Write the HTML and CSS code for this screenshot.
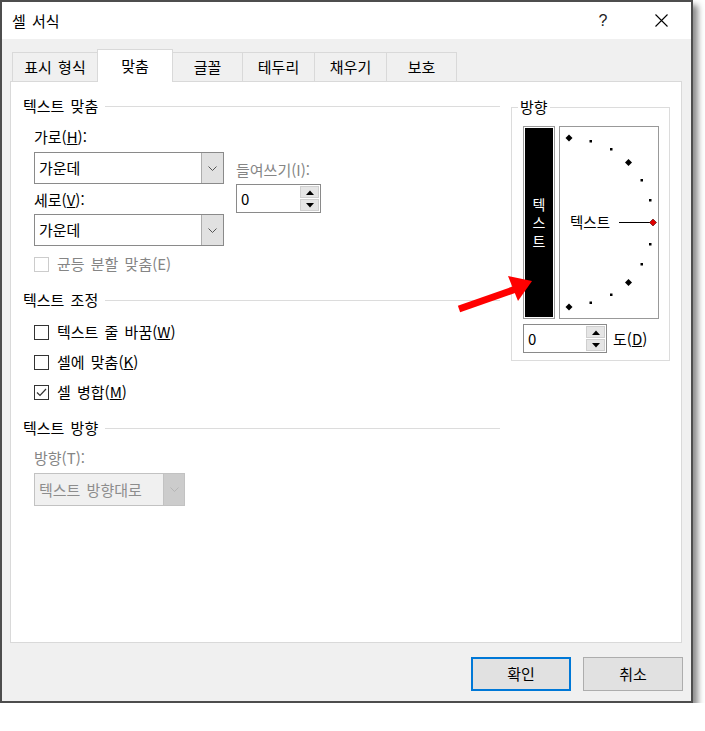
FILE: index.html
```html
<!DOCTYPE html>
<html lang="ko">
<head>
<meta charset="utf-8">
<title>셀 서식</title>
<link rel="stylesheet" href="styles.css">
</head>
<body>
<div class="dialog">
  <div class="titlebar">
    <span class="title">셀 서식</span>
    <div class="title-actions">
      <span class="help">?</span>
      <span class="close"><svg width="13" height="13" viewBox="0 0 13 13"><path d="M0.5 0.5L12.5 12.5M12.5 0.5L0.5 12.5" stroke="#000" stroke-width="1.1" fill="none"/></svg></span>
    </div>
  </div>

  <div class="tabs">
    <div class="tab t1">표시 형식</div>
    <div class="tab t2 active">맞춤</div>
    <div class="tab t3">글꼴</div>
    <div class="tab t4">테두리</div>
    <div class="tab t5">채우기</div>
    <div class="tab t6">보호</div>
  </div>

  <div class="panel">
    <div class="cols">
      <div class="left">
        <div class="group-head"><span>텍스트 맞춤</span><i class="rule"></i></div>
        <div class="align-row">
          <div class="align-main">
            <div class="lbl">가로(<u>H</u>):</div>
            <div class="combo c-first">
              <span class="combo-text">가운데</span>
              <span class="combo-btn"><svg width="9" height="5" viewBox="0 0 9 5"><polyline points="0.5,0.5 4.5,4.5 8.5,0.5" fill="none" stroke="#555" stroke-width="1"/></svg></span>
            </div>
            <div class="lbl l-second">세로(<u>V</u>):</div>
            <div class="combo c-second">
              <span class="combo-text">가운데</span>
              <span class="combo-btn"><svg width="9" height="5" viewBox="0 0 9 5"><polyline points="0.5,0.5 4.5,4.5 8.5,0.5" fill="none" stroke="#555" stroke-width="1"/></svg></span>
            </div>
          </div>
          <div class="indent">
            <div class="lbl dis">들여쓰기(I):</div>
            <div class="spin s-indent">
              <span class="spin-val">0</span>
              <span class="spin-btns">
                <span class="sb"><svg width="8" height="5" viewBox="0 0 8 5"><polygon points="0,5 4,0.5 8,5" fill="#000"/></svg></span>
                <span class="sb"><svg width="8" height="5" viewBox="0 0 8 5"><polygon points="0,0 4,4.5 8,0" fill="#000"/></svg></span>
              </span>
            </div>
          </div>
        </div>
        <div class="check dis c-dist"><span class="box"></span><span>균등 분할 맞춤(E)</span></div>

        <div class="group-head g2"><span>텍스트 조정</span><i class="rule"></i></div>
        <div class="check c-wrap"><span class="box"></span><span>텍스트 줄 바꿈(<u>W</u>)</span></div>
        <div class="check c-fit"><span class="box"></span><span>셀에 맞춤(<u>K</u>)</span></div>
        <div class="check c-merge"><span class="box"><svg width="13" height="13" viewBox="0 0 13 13"><polyline points="2,6.5 5,9.5 11,3" fill="none" stroke="#333" stroke-width="1.2"/></svg></span><span>셀 병합(<u>M</u>)</span></div>

        <div class="group-head g3"><span>텍스트 방향</span><i class="rule"></i></div>
        <div class="lbl dis l-dir">방향(T):</div>
        <div class="combo disabled">
          <span class="combo-text">텍스트 방향대로</span>
          <span class="combo-btn"><svg width="9" height="5" viewBox="0 0 9 5"><polyline points="0.5,0.5 4.5,4.5 8.5,0.5" fill="none" stroke="#b5b5b5" stroke-width="1"/></svg></span>
        </div>
      </div>

      <fieldset class="orient">
        <legend>방향</legend>
        <div class="orient-inner">
          <div class="orient-row">
            <div class="vtext"><span>텍</span><span>스</span><span>트</span></div>
            <div class="dial">
              <svg class="dial-svg" width="98" height="191" viewBox="0 0 98 191">
                <g fill="#000">
                  <polygon points="9,7.5 12.5,11 9,14.5 5.5,11"/>
                  <polygon points="68.5,32 72,35.5 68.5,39 65,35.5"/>
                  <polygon points="68.5,152 72,155.5 68.5,159 65,155.5"/>
                  <polygon points="9,176.5 12.5,180 9,183.5 5.5,180"/>
                  <rect x="29.5" y="13" width="2.5" height="2.5"/>
                  <rect x="50" y="21" width="2.5" height="2.5"/>
                  <rect x="80.5" y="52" width="2.5" height="2.5"/>
                  <rect x="89" y="72" width="2.5" height="2.5"/>
                  <rect x="89" y="116" width="2.5" height="2.5"/>
                  <rect x="80.5" y="136" width="2.5" height="2.5"/>
                  <rect x="50" y="166.5" width="2.5" height="2.5"/>
                  <rect x="29.5" y="174.5" width="2.5" height="2.5"/>
                </g>
                <line x1="59" y1="95.5" x2="90" y2="95.5" stroke="#000" stroke-width="1"/>
                <polygon points="93,92 96.5,95.5 93,99 89.5,95.5" fill="#e00000" stroke="#400" stroke-width="0.6"/>
              </svg>
              <span class="dial-text">텍스트</span>
            </div>
          </div>
          <div class="deg-row">
            <div class="spin s-deg">
              <span class="spin-val">0</span>
              <span class="spin-btns">
                <span class="sb"><svg width="8" height="5" viewBox="0 0 8 5"><polygon points="0,5 4,0.5 8,5" fill="#000"/></svg></span>
                <span class="sb"><svg width="8" height="5" viewBox="0 0 8 5"><polygon points="0,0 4,4.5 8,0" fill="#000"/></svg></span>
              </span>
            </div>
            <span class="deg-lbl">도(<u>D</u>)</span>
          </div>
        </div>
      </fieldset>
    </div>
  </div>

  <div class="buttons">
    <div class="btn default">확인</div>
    <div class="btn">취소</div>
  </div>

  <svg class="arrow" width="90" height="50" viewBox="0 0 90 50">
    <line x1="9" y1="39" x2="66" y2="19" stroke="#ff0000" stroke-width="7"/>
    <polygon points="58,6 82,11 68,31" fill="#ff0000"/>
  </svg>
</div>
</body>
</html>
```

FILE: styles.css
```css
* { box-sizing: border-box; }

body {
  margin: 0;
  background: #fff;
  font-family: "Noto Sans CJK KR", "Noto Sans", sans-serif;
  font-size: 15px;
  word-spacing: 2px;
  color: #000;
}

u { text-decoration: underline; text-underline-offset: 1px; }

.dialog {
  position: relative;
  width: 693px;
  height: 703px;
  border: 2px solid #4d4d4d;
  background: #f0f0f0;
  box-shadow: 5px 5px 6px rgba(0, 0, 0, 0.45);
  display: flex;
  flex-direction: column;
}

/* title bar */
.titlebar {
  height: 37px;
  background: #fff;
  display: flex;
  align-items: center;
  padding-left: 10px;
  flex-shrink: 0;
}
.title { line-height: 20px; }
.title-actions {
  margin-left: auto;
  margin-right: 7px;
  display: flex;
  align-items: center;
}
.help {
  width: 20px;
  text-align: center;
  line-height: 20px;
  color: #222;
  font-family: "Liberation Sans", sans-serif;
  font-size: 16px;
}
.close {
  width: 46px;
  margin-left: 25px;
  display: flex;
  justify-content: center;
}

/* tabs */
.tabs {
  display: flex;
  align-items: flex-end;
  height: 32px;
  margin-top: 10px;
  padding-left: 11px;
  flex-shrink: 0;
}
.tab {
  height: 29px;
  margin-left: -1px;
  border: 1px solid #d9d9d9;
  border-bottom: none;
  background: #f0f0f0;
  display: flex;
  align-items: center;
  justify-content: center;
  line-height: 20px;
}
.tab.active {
  position: relative;
  z-index: 1;
  height: 33px;
  margin-bottom: -1px;
  background: #fff;
}
.t1 { width: 86px; }
.t2 { width: 76px; }
.t3 { width: 71px; }
.t4 { width: 73px; }
.t5 { width: 73px; }
.t6 { width: 71px; }

/* panel */
.panel {
  margin: 0 9px 0 8px;
  height: 562px;
  border: 1px solid #d9d9d9;
  background: #fff;
  flex-shrink: 0;
}
.cols {
  display: flex;
  align-items: flex-start;
  padding-left: 12px;
}
.left {
  width: 477px;
  padding-top: 14px;
}

.group-head {
  display: flex;
  align-items: center;
  height: 20px;
  line-height: 20px;
}
.group-head .rule {
  flex: 1;
  height: 1px;
  background: #dcdcdc;
  margin-left: 7px;
}
.g2 { margin-top: 16px; }
.g3 { margin-top: 16px; }

.lbl {
  height: 20px;
  line-height: 20px;
  white-space: nowrap;
}
.dis { color: #858585; }

.align-row {
  display: flex;
  margin-top: 11px;
  margin-left: 11px;
}
.align-main { width: 190px; }
.c-first { margin-top: 5px; }
.l-second { margin-top: 6px; }
.c-second { margin-top: 4px; }

.indent {
  margin-left: 12px;
  padding-top: 33px;
}

/* combo box */
.combo {
  width: 190px;
  height: 32px;
  border: 1px solid #8a8a8a;
  background: #fff;
  display: flex;
  align-items: stretch;
}
.combo-text {
  flex: 1;
  padding-left: 4px;
  display: flex;
  align-items: center;
  line-height: 20px;
}
.combo-btn {
  width: 22px;
  background: #e1e1e1;
  border-left: 1px solid #adadad;
  display: flex;
  align-items: center;
  justify-content: center;
}
.combo.disabled {
  width: 151px;
  height: 33px;
  margin-left: 11px;
  margin-top: 5px;
  border-color: #c2c2c2;
  background: #f0f0f0;
  color: #8d8d8d;
}
.combo.disabled .combo-btn {
  width: 21px;
  background: #cccccc;
  border-left-color: #c2c2c2;
}

/* spin box */
.spin {
  height: 29px;
  border: 1px solid #8a8a8a;
  background: #fff;
  display: flex;
  align-items: stretch;
}
.s-indent { width: 85px; margin-top: 4px; }
.s-deg { width: 84px; }
.spin-val {
  flex: 1;
  padding-left: 4px;
  display: flex;
  align-items: center;
  line-height: 20px;
}
.spin-btns {
  width: 19px;
  margin: 1px 1px 1px 0;
  display: flex;
  flex-direction: column;
  gap: 1px;
}
.sb {
  flex: 1;
  background: #e5e5e5;
  border: 1px solid #cfcfcf;
  display: flex;
  align-items: center;
  justify-content: center;
}

/* checkboxes */
.check {
  display: flex;
  align-items: center;
  height: 20px;
  line-height: 20px;
  margin-left: 11px;
  white-space: nowrap;
}
.check .box {
  width: 15px;
  height: 15px;
  border: 1px solid #333;
  background: #fff;
  margin-right: 8px;
  display: flex;
  align-items: center;
  justify-content: center;
}
.check.dis .box { border-color: #cccccc; }
.c-dist { margin-top: 8px; }
.c-wrap { margin-top: 12px; }
.c-fit { margin-top: 10px; }
.c-merge { margin-top: 10px; }
.l-dir { margin-top: 10px; margin-left: 11px; }

/* orientation group */
.orient {
  margin: 15px 0 0 11px;
  padding: 0;
  width: 159px;
  border: 1px solid #dcdcdc;
  min-width: 0;
}
.orient legend {
  padding: 0 2px;
  margin-left: 6px;
  line-height: 20px;
  height: 20px;
}
.orient-inner {
  padding: 9px 0 7px 11px;
}
.orient-row {
  display: flex;
  gap: 4px;
}
.vtext {
  width: 32px;
  height: 193px;
  border: 1px solid #9a9a9a;
  padding: 1px;
  background: #000;
  background-clip: content-box;
  color: #fff;
  font-size: 14px;
  line-height: 18.5px;
  display: flex;
  flex-direction: column;
  align-items: center;
  justify-content: center;
}
.dial {
  position: relative;
  width: 100px;
  height: 193px;
  border: 1px solid #999;
  background: #fff;
}
.dial-svg { display: block; }
.dial-text {
  position: absolute;
  left: 10px;
  top: 85px;
  line-height: 20px;
  font-size: 14.5px;
}
.deg-row {
  display: flex;
  align-items: center;
  margin-top: 5px;
}
.deg-lbl {
  margin-left: 6px;
  line-height: 20px;
}

/* buttons */
.buttons {
  display: flex;
  justify-content: flex-end;
  gap: 12px;
  margin-top: 14px;
  padding-right: 8px;
}
.btn {
  width: 100px;
  height: 34px;
  border: 1px solid #adadad;
  background: #e1e1e1;
  display: flex;
  align-items: center;
  justify-content: center;
  line-height: 20px;
}
.btn.default {
  border: 2px solid #0078d7;
}

/* annotation arrow */
.arrow {
  position: absolute;
  left: 448px;
  top: 268px;
  pointer-events: none;
}
```
